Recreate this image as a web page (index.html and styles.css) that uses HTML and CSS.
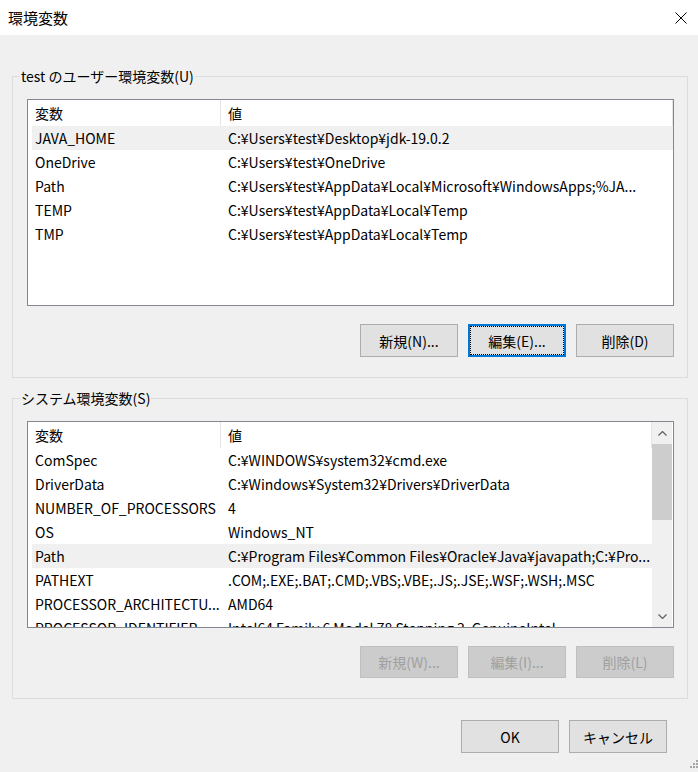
FILE: index.html
```html
<!doctype html>
<html lang="ja">
  <head>
    <meta charset="UTF-8" />
    <meta name="viewport" content="width=device-width, initial-scale=1.0" />
    <title>環境変数</title>
    <link rel="stylesheet" href="styles.css">
  </head>
  <body>
    <div class="titlebar">
      <span class="title">環境変数</span>
      <button class="close-btn" aria-label="閉じる">
        <svg width="12" height="12" viewBox="0 0 12 12">
          <path d="M0.5 0.5 L11.5 11.5 M11.5 0.5 L0.5 11.5" stroke="#000" stroke-width="1" fill="none" />
        </svg>
      </button>
    </div>

    <main class="content">
      <fieldset class="grupo">
        <legend>test のユーザー環境変数(U)</legend>
        <div class="listbox">
          <div class="lista">
            <div class="cabecera">
              <span class="col-nombre">変数</span>
              <span class="col-valor">値</span>
            </div>
            <div class="fila seleccionada">
              <span class="col-nombre">JAVA_HOME</span>
              <span class="col-valor">C:¥Users¥test¥Desktop¥jdk-19.0.2</span>
            </div>
            <div class="fila">
              <span class="col-nombre">OneDrive</span>
              <span class="col-valor">C:¥Users¥test¥OneDrive</span>
            </div>
            <div class="fila">
              <span class="col-nombre">Path</span>
              <span class="col-valor">C:¥Users¥test¥AppData¥Local¥Microsoft¥WindowsApps;%JA...</span>
            </div>
            <div class="fila">
              <span class="col-nombre">TEMP</span>
              <span class="col-valor">C:¥Users¥test¥AppData¥Local¥Temp</span>
            </div>
            <div class="fila">
              <span class="col-nombre">TMP</span>
              <span class="col-valor">C:¥Users¥test¥AppData¥Local¥Temp</span>
            </div>
          </div>
        </div>
        <div class="acciones">
          <button class="btn">新規(N)...</button>
          <button class="btn enfocado">編集(E)...</button>
          <button class="btn">削除(D)</button>
        </div>
      </fieldset>

      <fieldset class="grupo grupo-sistema">
        <legend>システム環境変数(S)</legend>
        <div class="listbox">
          <div class="lista">
            <div class="cabecera">
              <span class="col-nombre">変数</span>
              <span class="col-valor">値</span>
            </div>
            <div class="fila">
              <span class="col-nombre">ComSpec</span>
              <span class="col-valor">C:¥WINDOWS¥system32¥cmd.exe</span>
            </div>
            <div class="fila">
              <span class="col-nombre">DriverData</span>
              <span class="col-valor">C:¥Windows¥System32¥Drivers¥DriverData</span>
            </div>
            <div class="fila">
              <span class="col-nombre">NUMBER_OF_PROCESSORS</span>
              <span class="col-valor">4</span>
            </div>
            <div class="fila">
              <span class="col-nombre">OS</span>
              <span class="col-valor">Windows_NT</span>
            </div>
            <div class="fila seleccionada">
              <span class="col-nombre">Path</span>
              <span class="col-valor">C:¥Program Files¥Common Files¥Oracle¥Java¥javapath;C:¥Pro...</span>
            </div>
            <div class="fila">
              <span class="col-nombre">PATHEXT</span>
              <span class="col-valor">.COM;.EXE;.BAT;.CMD;.VBS;.VBE;.JS;.JSE;.WSF;.WSH;.MSC</span>
            </div>
            <div class="fila">
              <span class="col-nombre">PROCESSOR_ARCHITECTU...</span>
              <span class="col-valor">AMD64</span>
            </div>
            <div class="fila">
              <span class="col-nombre">PROCESSOR_IDENTIFIER</span>
              <span class="col-valor">Intel64 Family 6 Model 78 Stepping 3, GenuineIntel</span>
            </div>
          </div>
          <div class="scrollbar">
            <div class="flecha">
              <svg width="9" height="5" viewBox="0 0 9 5">
                <polyline points="0.5,4.5 4.5,0.5 8.5,4.5" stroke="#606060" stroke-width="1.2" fill="none" />
              </svg>
            </div>
            <div class="pista">
              <div class="pulgar"></div>
            </div>
            <div class="flecha">
              <svg width="9" height="5" viewBox="0 0 9 5">
                <polyline points="0.5,0.5 4.5,4.5 8.5,0.5" stroke="#606060" stroke-width="1.2" fill="none" />
              </svg>
            </div>
          </div>
        </div>
        <div class="acciones">
          <button class="btn" disabled>新規(W)...</button>
          <button class="btn" disabled>編集(I)...</button>
          <button class="btn" disabled>削除(L)</button>
        </div>
      </fieldset>
    </main>

    <div class="pie">
      <button class="btn">OK</button>
      <button class="btn">キャンセル</button>
    </div>

    <svg class="agarre" width="10" height="10" viewBox="0 0 10 10">
      <rect x="8" y="0" width="2" height="2" fill="#a6a6a6" />
      <rect x="5" y="3" width="2" height="2" fill="#a6a6a6" />
      <rect x="8" y="3" width="2" height="2" fill="#a6a6a6" />
      <rect x="2" y="6" width="2" height="2" fill="#a6a6a6" />
      <rect x="5" y="6" width="2" height="2" fill="#a6a6a6" />
      <rect x="8" y="6" width="2" height="2" fill="#a6a6a6" />
    </svg>
  </body>
</html>
```

FILE: styles.css
```css
* {
  box-sizing: border-box;
}

html,
body {
  margin: 0;
}

body {
  width: 698px;
  height: 772px;
  background-color: #f0f0f0;
  font-family: "Noto Sans CJK JP", "Noto Sans", sans-serif;
  font-size: 14px;
  color: #000;
  position: relative;
  overflow: hidden;
}

.titlebar {
  height: 35px;
  background-color: #fff;
  display: flex;
  align-items: center;
  justify-content: space-between;
  padding-left: 8px;
}

.title {
  font-size: 15px;
  line-height: 20px;
}

.close-btn {
  width: 34px;
  height: 35px;
  display: flex;
  align-items: center;
  justify-content: center;
  background: none;
  border: none;
  padding: 0;
}

.content {
  padding: 0 10px 0 12px;
}

.grupo {
  margin: 31px 0 0;
  border: 1px solid #dcdcdc;
  padding: 0 13px 20px 14px;
  min-width: 0;
}

.grupo-sistema {
  margin-top: 10px;
}

.grupo legend {
  padding: 0 1px;
  margin-left: -7px;
  line-height: 20px;
}

.listbox {
  height: 207px;
  margin-top: 13px;
  border: 1px solid #828790;
  background-color: #fff;
  display: flex;
}

.lista {
  flex: 1;
  overflow: hidden;
  padding-left: 4px;
}

.cabecera,
.fila {
  display: flex;
  white-space: nowrap;
}

.cabecera {
  height: 26px;
  line-height: 26px;
}

.fila {
  height: 24px;
  line-height: 24px;
}

.fila.seleccionada {
  background-color: #f0f0f0;
}

.col-nombre {
  width: 189px;
  padding-left: 3px;
  overflow: hidden;
  flex-shrink: 0;
}

.col-valor {
  flex: 1;
  padding-left: 7px;
  overflow: hidden;
}

.cabecera .col-nombre,
.cabecera .col-valor {
  border-right: 1px solid #e5e5e5;
}

.scrollbar {
  width: 20px;
  margin-right: 1px;
  background-color: #f0f0f0;
  display: flex;
  flex-direction: column;
}

.flecha {
  height: 22px;
  display: flex;
  align-items: center;
  justify-content: center;
}

.pista {
  flex: 1;
}

.pulgar {
  height: 76px;
  background-color: #cdcdcd;
}

.acciones {
  display: flex;
  justify-content: flex-end;
  gap: 10px;
  margin-top: 18px;
}

.grupo-sistema .acciones {
  margin-top: 18px;
}

.btn {
  width: 98px;
  height: 33px;
  padding: 0;
  border: 1px solid #adadad;
  background-color: #e1e1e1;
  font-family: inherit;
  font-size: 14px;
  color: #000;
}

.btn.enfocado {
  border: 2px solid #0078d7;
  outline: 1px dotted #000;
  outline-offset: -3px;
}

.btn:disabled {
  background-color: #cccccc;
  border-color: #bfbfbf;
  color: #a0a0a0;
}

.grupo-sistema .btn {
  height: 32px;
}

.grupo-sistema {
  padding-bottom: 20px;
}

.pie {
  display: flex;
  justify-content: flex-end;
  gap: 10px;
  margin-top: 21px;
  padding-right: 31px;
}

.agarre {
  position: absolute;
  right: 0;
  bottom: 2px;
}
```
